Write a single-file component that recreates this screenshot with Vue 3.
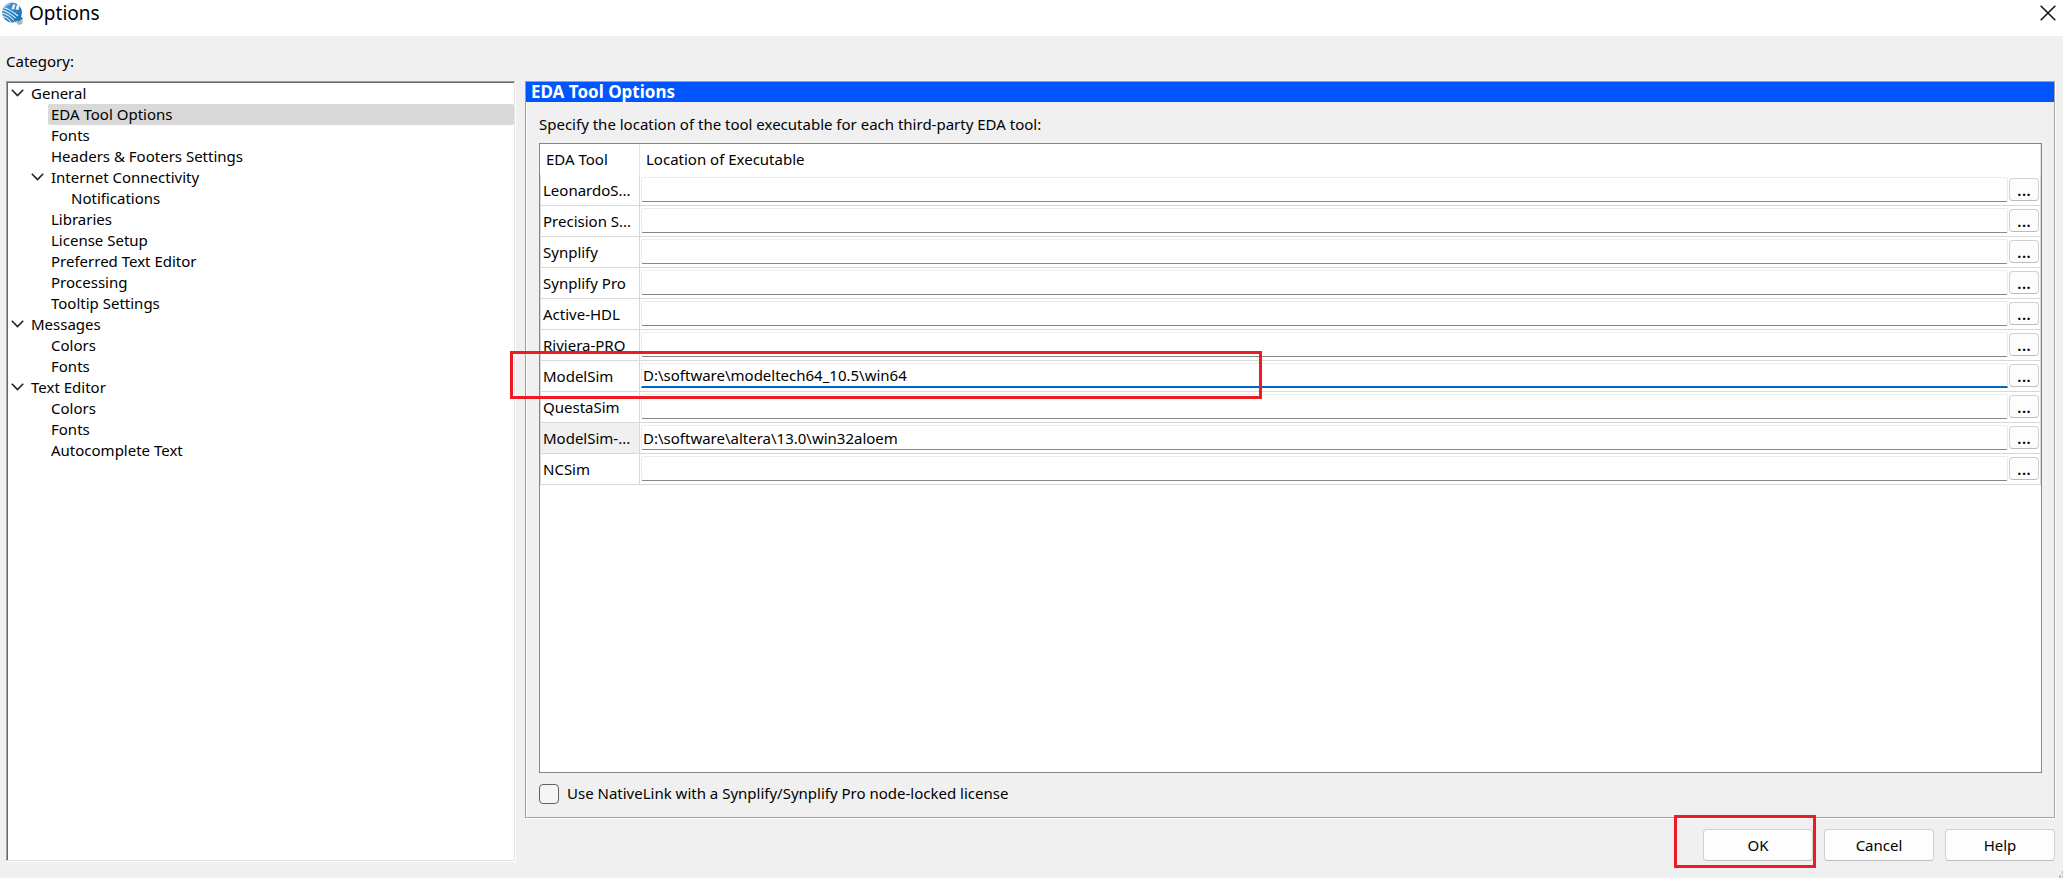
<script setup>
import { ref } from 'vue'

const categories = [
  { label: 'General', level: 0, open: true },
  { label: 'EDA Tool Options', level: 1 },
  { label: 'Fonts', level: 1 },
  { label: 'Headers & Footers Settings', level: 1 },
  { label: 'Internet Connectivity', level: 1, open: true },
  { label: 'Notifications', level: 2 },
  { label: 'Libraries', level: 1 },
  { label: 'License Setup', level: 1 },
  { label: 'Preferred Text Editor', level: 1 },
  { label: 'Processing', level: 1 },
  { label: 'Tooltip Settings', level: 1 },
  { label: 'Messages', level: 0, open: true },
  { label: 'Colors', level: 1 },
  { label: 'Fonts', level: 1 },
  { label: 'Text Editor', level: 0, open: true },
  { label: 'Colors', level: 1 },
  { label: 'Fonts', level: 1 },
  { label: 'Autocomplete Text', level: 1 },
]
const selected = ref(1)

const tools = ref([
  { name: 'LeonardoS...', path: '' },
  { name: 'Precision S...', path: '' },
  { name: 'Synplify', path: '' },
  { name: 'Synplify Pro', path: '' },
  { name: 'Active-HDL', path: '' },
  { name: 'Riviera-PRO', path: '' },
  { name: 'ModelSim', path: 'D:\\software\\modeltech64_10.5\\win64', active: true },
  { name: 'QuestaSim', path: '' },
  { name: 'ModelSim-...', path: 'D:\\software\\altera\\13.0\\win32aloem', shaded: true },
  { name: 'NCSim', path: '' },
])
const nativeLink = ref(false)
</script>

<template>
  <div class="dialog">
    <header class="titlebar">
      <svg class="logo" viewBox="0 0 22 24" aria-hidden="true">
        <defs>
          <linearGradient id="globe" x1="0" y1="0" x2="1" y2="1">
            <stop offset="0" stop-color="#5aa6d8" />
            <stop offset="0.5" stop-color="#2f83c0" />
            <stop offset="1" stop-color="#1a6fb0" />
          </linearGradient>
        </defs>
        <circle cx="11" cy="11.5" r="10" fill="url(#globe)" />
        <path d="M1 9C6 10 10 13 16 18M1 12C6 13 9 15 13 19.5M2 15C5 16 7 17.500 10 21M2.500 6.500C8 8 12 10.500 17 15" fill="none" stroke="#dcecf7" stroke-width="1.1" />
        <path d="M10.500 8L12 3.500H14.500L13 8.500ZM14.500 8.500L16 3.500L18.500 4.500L17.500 9Z" fill="#eaf4fb" />
        <path d="M9 2.500C6 3.500 4 5 3 7.500" stroke="#9ccbea" stroke-width="1.6" fill="none" />
        <path d="M14 17L19 14L22 18L17 21Z" fill="#2478b8" />
        <path d="M13 20L17 21L22 19L21 23L18 24Z" fill="#a9b6c0" />
      </svg>
      <h1 class="title">Options</h1>
      <button class="close" type="button" aria-label="Close">
        <svg viewBox="0 0 16 16" aria-hidden="true"><path d="M0.7 0.7L15.3 15.3M15.3 0.7L0.7 15.3" /></svg>
      </button>
    </header>

    <main class="content">
      <div id="category-label" class="category-label">Category:</div>

      <div class="columns">
        <ul class="tree" role="tree" aria-labelledby="category-label">
          <li
            v-for="(item, i) in categories"
            :key="i"
            role="treeitem"
            :aria-level="item.level + 1"
            :aria-selected="selected === i"
            :class="['node', `level-${item.level}`]"
          >
            <span class="twisty">
              <svg v-if="item.open" viewBox="0 0 13 8" aria-hidden="true"><path d="M0.8 0.8L6.5 6.6L12.2 0.8" /></svg>
            </span>
            <button type="button" class="node-label" :class="{ selected: selected === i }" @click="selected = i">
              {{ item.label }}
            </button>
          </li>
        </ul>

        <div class="right">
          <section class="panel">
            <h2 class="panel-title">EDA Tool Options</h2>
            <div class="panel-body">
              <p class="hint">Specify the location of the tool executable for each third-party EDA tool:</p>
              <div class="table-box">
                <table class="tools">
                  <colgroup>
                    <col class="col-tool" />
                    <col />
                  </colgroup>
                  <thead>
                    <tr>
                      <th scope="col">EDA Tool</th>
                      <th scope="col">Location of Executable</th>
                    </tr>
                  </thead>
                  <tbody>
                    <tr v-for="(tool, i) in tools" :key="tool.name">
                      <td class="name" :class="{ shaded: tool.shaded }">
                        <label :for="`path-${i}`">{{ tool.name }}</label>
                      </td>
                      <td class="location">
                        <div class="editor">
                          <input :id="`path-${i}`" v-model="tool.path" class="path" :class="{ active: tool.active }" type="text" spellcheck="false" />
                          <button class="browse" type="button" :aria-label="`Browse for ${tool.name}`">...</button>
                        </div>
                        <span v-if="tool.active" class="mark mark-row"></span>
                      </td>
                    </tr>
                  </tbody>
                </table>
              </div>
              <label class="check">
                <input v-model="nativeLink" type="checkbox" />
                <span>Use NativeLink with a Synplify/Synplify Pro node-locked license</span>
              </label>
            </div>
          </section>

          <footer class="actions">
            <div class="ok-wrap">
              <button class="action" type="button">OK</button>
              <span class="mark mark-ok"></span>
            </div>
            <button class="action" type="button">Cancel</button>
            <button class="action" type="button">Help</button>
          </footer>
        </div>
      </div>
    </main>

    <svg class="grip" viewBox="0 0 4 7" aria-hidden="true"><path d="M0 4h2v3H0zM3 4h1v3H3zM3 0h1v3H3z" /></svg>
  </div>
</template>

<style>
body {
  margin: 0;
  background: #f0f0f0;
}
</style>

<style scoped>
.dialog {
  position: relative;
  display: flex;
  flex-direction: column;
  min-height: 100vh;
  box-sizing: border-box;
  background: #f0f0f0;
  color: #000;
  font-family: "Noto Sans", "Open Sans", sans-serif;
  font-size: 15px;
  line-height: 21px;
}
.dialog *,
.dialog *::before {
  box-sizing: border-box;
}
button,
input {
  margin: 0;
  font: inherit;
  color: inherit;
}
.titlebar {
  display: flex;
  align-items: center;
  height: 36px;
  padding: 0 7px 10px 1px;
  background: #fff;
}
.logo {
  width: 22px;
  height: 24px;
}
.title {
  flex: 1;
  margin: 0 0 0 6px;
  font-size: 19px;
  font-weight: 400;
  line-height: 24px;
}
.close {
  display: flex;
  padding: 0;
  border: 0;
  background: none;
}
.close svg {
  width: 16px;
  height: 16px;
  fill: none;
  stroke: #111;
  stroke-width: 1.5;
}
.content {
  flex: 1;
  display: flex;
  flex-direction: column;
  padding: 15px 8px 17px 6px;
}
.category-label {
  height: 30px;
}
.columns {
  flex: 1;
  display: grid;
  grid-template-columns: minmax(0, 509fr) minmax(0, 1530fr);
  gap: 10px;
}
.tree {
  margin: 0;
  padding: 1px 0 0;
  list-style: none;
  background: #fff;
  border: 1px solid;
  border-color: #a0a0a0 #e3e3e3 #e3e3e3 #a0a0a0;
  box-shadow: inset 1px 1px 0 #696969, 1px 1px 0 #fff;
}
.node {
  display: flex;
  height: 21px;
  padding-left: 4px;
}
.level-1 {
  padding-left: 24px;
}
.level-2 {
  padding-left: 44px;
}
.twisty {
  width: 17px;
  padding-top: 6px;
  line-height: 0;
}
.twisty svg {
  width: 13px;
  height: 8px;
  fill: none;
  stroke: #222;
  stroke-width: 1.6;
}
.node-label {
  flex: 1;
  padding: 0 3px;
  border: 0;
  border-radius: 2px;
  background: none;
  text-align: left;
  line-height: 21px;
}
.node-label.selected {
  background: #d9d9d9;
}
.right {
  display: flex;
  flex-direction: column;
  gap: 11px;
}
.panel {
  flex: 1;
  display: flex;
  flex-direction: column;
  border: 1px solid #a0a0a0;
  box-shadow: inset 1px 1px 0 #fff, 1px 1px 0 #fff;
}
.panel-title {
  margin: 0;
  padding: 0 5px;
  background: #0055ff;
  color: #fff;
  font-size: 17px;
  font-weight: 700;
  line-height: 20px;
}
.panel-body {
  flex: 1;
  display: flex;
  flex-direction: column;
  padding: 12px 12px 13px 13px;
}
.hint {
  margin: 0;
  padding-bottom: 8px;
}
.table-box {
  flex: 1;
  background: #fff;
  border: 1px solid #828790;
}
.tools {
  width: 100%;
  table-layout: fixed;
  border-collapse: separate;
  border-spacing: 0;
}
.col-tool {
  width: 100px;
}
.tools th {
  height: 31px;
  padding: 0 6px;
  font-weight: 400;
  text-align: left;
  border-right: 1px solid #e5e5e5;
}
.tools td {
  height: 31px;
  padding: 0;
  border-right: 1px solid #d8d8d8;
  border-bottom: 1px solid #d8d8d8;
}
.tools .name {
  padding-left: 2px;
  border-left: 1px solid #d8d8d8;
  white-space: nowrap;
  overflow: hidden;
}
.name.shaded {
  background: #f0f0f0;
}
.tools .location {
  position: relative;
  vertical-align: top;
}
.editor {
  display: flex;
  align-items: center;
  gap: 1px;
  padding: 2px 1px 0;
}
.path {
  flex: 1;
  min-width: 0;
  height: 25px;
  padding: 0 1px;
  border: 1px solid #ececec;
  border-bottom-color: #868686;
  border-radius: 2px;
  background: #fff;
  outline: 0;
}
.path.active {
  border-bottom: 2px solid #0067c0;
  border-radius: 0;
}
.browse {
  width: 30px;
  height: 23px;
  padding: 0;
  border: 1px solid #d0d0d0;
  border-bottom-color: #bcbcbc;
  border-radius: 4px;
  background: #fdfdfd;
  font-size: 17px;
  font-weight: 500;
  line-height: 21px;
}
.check {
  display: flex;
  align-items: center;
  align-self: flex-start;
  gap: 8px;
  margin-top: 10px;
}
.check input {
  appearance: none;
  width: 20px;
  height: 20px;
  border: 1px solid #626262;
  border-radius: 4px;
  background: #f5f5f5;
}
.check input:checked {
  background: #0067c0;
}
.actions {
  display: flex;
  justify-content: flex-end;
  gap: 11px;
}
.ok-wrap {
  position: relative;
}
.action {
  display: block;
  width: 110px;
  height: 32px;
  padding: 0;
  border: 1px solid #d0d0d0;
  border-bottom-color: #bcbcbc;
  border-radius: 4px;
  background: #fdfdfd;
}
.mark {
  position: absolute;
  z-index: 1;
  border: 3px solid #ed1c24;
  pointer-events: none;
}
.mark-row {
  top: -10px;
  left: -130px;
  width: 752px;
  height: 48px;
}
.mark-ok {
  top: -14px;
  left: -29px;
  width: 142px;
  height: 53px;
}
.grip {
  position: absolute;
  right: 0;
  bottom: 0;
  width: 4px;
  height: 7px;
  fill: #bfbfbf;
}
</style>
